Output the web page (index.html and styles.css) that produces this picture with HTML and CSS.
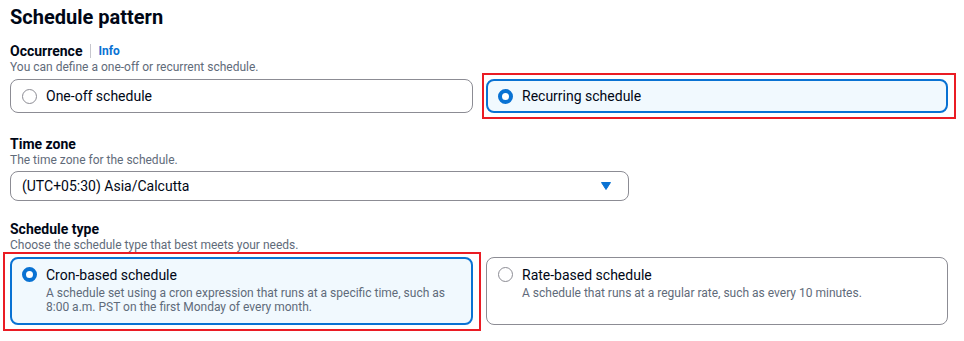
FILE: index.html
```html
<!DOCTYPE html>
<html lang="en">
<head>
    <meta charset="UTF-8">
    <title>Schedule pattern</title>
    <link rel="stylesheet" href="styles.css">
</head>
<body>
    <div class="panel">
        <h2 class="panel-title">Schedule pattern</h2>

        <!-- Occurrence -->
        <div class="field field-first">
            <div class="label-row">
                <span class="label">Occurrence</span>
                <span class="divider"></span>
                <a href="#" class="info">Info</a>
            </div>
            <div class="desc">You can define a one-off or recurrent schedule.</div>
            <div class="tiles">
                <label class="tile tile-short">
                    <span class="radio"></span>
                    <span class="tile-title">One-off schedule</span>
                </label>
                <label class="tile tile-short selected marked marked-top">
                    <span class="radio"></span>
                    <span class="tile-title">Recurring schedule</span>
                </label>
            </div>
        </div>

        <!-- Time zone -->
        <div class="field">
            <div class="label-row">
                <span class="label">Time zone</span>
            </div>
            <div class="desc">The time zone for the schedule.</div>
            <div class="select">
                <span>(UTC+05:30) Asia/Calcutta</span>
                <svg class="caret" width="10" height="8" viewBox="0 0 10 8">
                    <path d="M0.5 0.5 L9.5 0.5 L5 7.5 Z" fill="#0972d3" stroke="#0972d3" stroke-linejoin="round"/>
                </svg>
            </div>
        </div>

        <!-- Schedule type -->
        <div class="field field-last">
            <div class="label-row">
                <span class="label">Schedule type</span>
            </div>
            <div class="desc">Choose the schedule type that best meets your needs.</div>
            <div class="tiles">
                <label class="tile tile-tall selected marked marked-bottom">
                    <span class="radio"></span>
                    <span class="tile-body">
                        <span class="tile-title">Cron-based schedule</span>
                        <span class="tile-desc">A schedule set using a cron expression that runs at a specific time, such as 8:00 a.m. PST on the first Monday of every month.</span>
                    </span>
                </label>
                <label class="tile tile-tall">
                    <span class="radio"></span>
                    <span class="tile-body">
                        <span class="tile-title">Rate-based schedule</span>
                        <span class="tile-desc">A schedule that runs at a regular rate, such as every 10 minutes.</span>
                    </span>
                </label>
            </div>
        </div>
    </div>
</body>
</html>
```

FILE: styles.css
```css
/* Page */
body {
    margin: 0;
    padding: 0;
    background: #ffffff;
    font-family: Roboto, "Open Sans", sans-serif;
    color: #000716;
}

.panel {
    width: 938px;
    padding: 5px 16px 20px 10px;
}

/* Heading */
.panel-title {
    margin: 0;
    font-size: 20px;
    line-height: 24px;
    font-weight: 700;
}

/* Form fields */
.field {
    margin-top: 23px;
}

.field-first {
    margin-top: 14px;
}

.field-last {
    margin-top: 20px;
}

.label-row {
    display: flex;
    align-items: center;
    height: 16px;
}

.label {
    font-size: 14px;
    font-weight: 700;
    line-height: 16px;
}

.divider {
    width: 1px;
    height: 14px;
    background: #c6c6cd;
    margin: 0 7px 0 8px;
}

.info {
    font-size: 12px;
    font-weight: 700;
    color: #0972d3;
    text-decoration: none;
}

.desc {
    font-size: 12px;
    line-height: 14px;
    color: #5f6b7a;
    margin-top: 1px;
}

/* Tiles */
.tiles {
    display: grid;
    grid-template-columns: 463px 462px;
    gap: 13px;
    margin-top: 5px;
}

.tile {
    position: relative;
    display: flex;
    align-items: flex-start;
    gap: 9px;
    box-sizing: border-box;
    border: 1px solid #8c8c94;
    border-radius: 8px;
    padding: 0 11px;
    background: #ffffff;
}

.tile-short {
    height: 34px;
    align-items: center;
}

.tile-tall {
    height: 68px;
    padding-top: 8px;
}

.tile.selected {
    border: 2px solid #0972d3;
    background: #f1f9fe;
    padding-left: 10px;
}

.tile-tall.selected {
    padding-top: 7px;
}

.radio {
    flex: none;
    width: 15px;
    height: 15px;
    box-sizing: border-box;
    border: 1.5px solid #8c8c94;
    border-radius: 50%;
    background: #ffffff;
}

.tile-tall .radio {
    margin-top: 1px;
}

.selected .radio {
    border: 4.5px solid #0972d3;
}

.tile-body {
    display: flex;
    flex-direction: column;
}

.tile-title {
    font-size: 14px;
    line-height: 18px;
}

.tile-desc {
    font-size: 12px;
    line-height: 14px;
    color: #5f6b7a;
    margin-top: 2px;
    padding-right: 12px;
}

/* Red annotation boxes */
.marked::after {
    content: "";
    position: absolute;
    border: 2px solid #ea1c24;
    pointer-events: none;
}

.marked-top::after {
    top: -8px;
    right: -10px;
    bottom: -8px;
    left: -6px;
}

.marked-bottom::after {
    top: -7px;
    right: -10px;
    bottom: -8px;
    left: -9px;
}

/* Select */
.select {
    display: flex;
    align-items: center;
    justify-content: space-between;
    box-sizing: border-box;
    width: 619px;
    height: 30px;
    margin-top: 4px;
    padding: 0 17px 0 11px;
    border: 1px solid #8c8c94;
    border-radius: 8px;
    font-size: 14px;
}

.caret {
    display: block;
}
```
